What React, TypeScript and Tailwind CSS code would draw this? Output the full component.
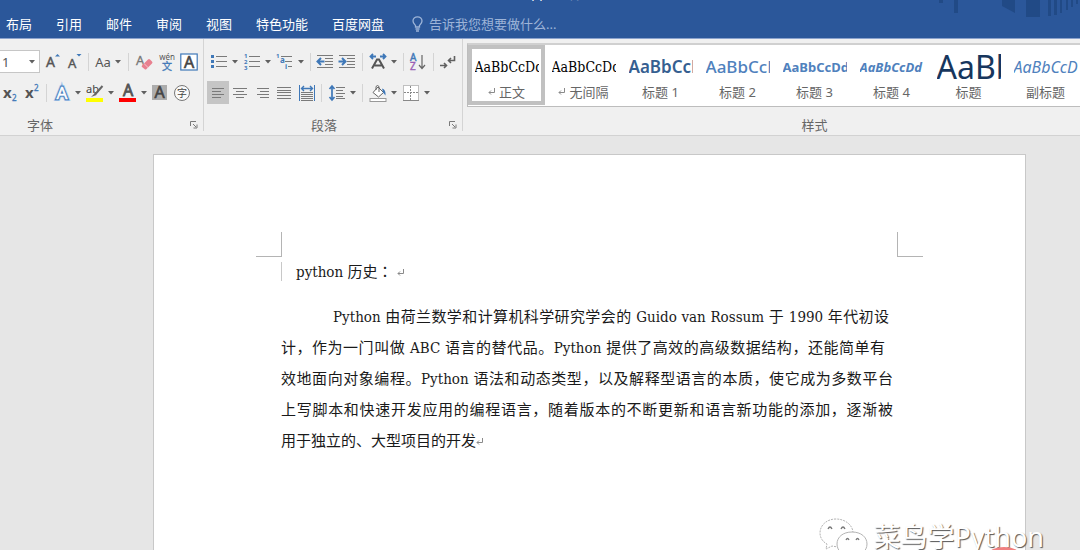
// src/App.tsx
import type { ReactNode } from 'react';

const tabs = ['布局', '引用', '邮件', '审阅', '视图', '特色功能', '百度网盘'];

const styles = [
  { name: '正文', mark: true, sample: 'font-["DejaVu_Serif_Condensed","Liberation_Serif",serif] text-sm text-black' },
  { name: '无间隔', mark: true, sample: 'font-["DejaVu_Serif_Condensed","Liberation_Serif",serif] text-sm text-black' },
  { name: '标题 1', mark: false, sample: 'text-[17px] font-semibold text-[#365f91]' },
  { name: '标题 2', mark: false, sample: 'text-[17px] font-medium text-[#4f81bd]' },
  { name: '标题 3', mark: false, sample: 'text-[13px] font-bold text-[#4f81bd]' },
  { name: '标题 4', mark: false, sample: 'text-[13px] font-bold italic text-[#4f81bd]' },
  { name: '标题', mark: false, sample: 'text-[32px] text-[#17365d]' },
  { name: '副标题', mark: false, sample: 'text-base italic text-[#4f81bd]' },
];

const lines = [
  { text: 'Python 由荷兰数学和计算机科学研究学会的 Guido van Rossum 于 1990 年代初设', box: 'pl-13 pr-1' },
  { text: '计，作为一门叫做 ABC 语言的替代品。Python 提供了高效的高级数据结构，还能简单有', box: 'pr-2' },
  { text: '效地面向对象编程。Python 语法和动态类型，以及解释型语言的本质，使它成为多数平台', box: '' },
  { text: '上写脚本和快速开发应用的编程语言，随着版本的不断更新和语言新功能的添加，逐渐被', box: '' },
];

const GREY = '#7a7a7a';
const BLUE = '#3f78b8';

function Arrow() {
  return (
    <svg width="6" height="4" viewBox="0 0 6 4" fill="#606060" className="shrink-0">
      <path d="M0 0h6L3 3.5z" />
    </svg>
  );
}

function Tool({ label, children, menu, active }: { label: string; children: ReactNode; menu?: boolean; active?: boolean }) {
  const width = menu ? 'w-[33px]' : 'w-[22px]';
  return (
    <button
      type="button"
      aria-label={label}
      className={`flex h-[23px] shrink-0 items-center justify-center gap-1 ${width} ${active ? 'bg-[#c5c5c5]' : ''}`}
    >
      {children}
      {menu && <Arrow />}
    </button>
  );
}

function Sep({ tight }: { tight?: boolean }) {
  return (
    <span className={`flex h-[18px] shrink-0 justify-center ${tight ? 'w-1' : 'w-2'}`}>
      <span className="w-px bg-[#d4d4d4]" />
    </span>
  );
}

function Icon({ children }: { children: ReactNode }) {
  return (
    <svg width="18" height="18" viewBox="0 0 18 18" fill="none" stroke={GREY} className="shrink-0 overflow-visible" fontFamily="Noto Sans, Noto Sans CJK SC, sans-serif">
      {children}
    </svg>
  );
}

// Horizontal rules given as [x1, x2, y]
function Rules({ rows }: { rows: number[][] }) {
  return <path d={rows.map(([a, b, y]) => `M${a} ${y}.5H${b}`).join('')} />;
}

function Launcher({ label }: { label: string }) {
  return (
    <button type="button" aria-label={label} className="flex h-4 w-[18px] shrink-0 items-center justify-center">
      <svg width="8" height="8" viewBox="0 0 8 8" fill="none" stroke={GREY}>
        <path d="M.5 5V.5H6M3 3l3 3M7 3.5V7H3.5" />
      </svg>
    </button>
  );
}

function ReturnMark({ className = '' }: { className?: string }) {
  return (
    <svg width="7" height="8" viewBox="0 0 7 8" fill="none" stroke="#8a8a8a" className={`inline-block shrink-0 ${className}`}>
      <path d="M6.5 0v4.5H1M3 2.5l-2 2 2 2" />
    </svg>
  );
}

function Header() {
  return (
    <header className="relative h-[39px] shrink-0 overflow-hidden border-b border-[#8ba2cd] bg-[#2b579a] text-[13px] text-white">
      <svg width="180" height="18" viewBox="0 0 180 18" fill="#214a86" className="absolute top-0 right-0">
        <path d="M39 0h4v3h-4zM54 0h4v13h-4zM102 0h13v13l-13-7zM126 0h14v17h-14zM148 0h3v16h-3zM154 0h3v15h-3zM160 0h2v13h-2zM166 0h2v10h-2zM171 0h2v7h-2zM176 0h2v4h-2z" />
      </svg>
      <p className="-mt-4 h-4 pl-[524px] leading-[18px]">app [兼容模式]</p>
      <nav className="relative flex items-center gap-6 px-[6px] pt-[15px] leading-[18px]">
        {tabs.map((t) => (
          <button key={t} type="button" className="shrink-0">{t}</button>
        ))}
        <label className="flex flex-1 items-center gap-[6px] pl-1 text-[#9db4d8]">
          <svg width="11" height="16" viewBox="0 0 11 16" fill="none" stroke="currentColor" strokeWidth="1.3">
            <path d="M3.5 11V9.5C2.200 8 1 7 1 5a4.500 4.200 0 0 1 9 0c0 2-1.200 3-2.500 4.500V11zM3.500 13h4M4 15h3" />
          </svg>
          <input
            type="text"
            aria-label="告诉我您想要做什么"
            placeholder="告诉我您想要做什么..."
            className="h-[18px] flex-1 bg-transparent outline-none placeholder:text-[#9db4d8]"
          />
        </label>
      </nav>
    </header>
  );
}

function FontGroup() {
  return (
    <section className="flex w-[203px] shrink-0 flex-col pt-[11px]">
      <div className="flex items-center">
        <label className="relative mr-0.5 flex h-[23px] w-10 items-center border border-l-0 border-[#c6c6c6] bg-white">
          <select aria-label="字号" className="w-full appearance-none pl-0.5 text-[13px] text-[#555]">
            <option>1</option>
          </select>
          <span className="pointer-events-none absolute right-1"><Arrow /></span>
        </label>
        <Tool label="增大字号">
          <Icon>
            <text x="2" y="14" fontSize="14" fill="#555" stroke="#555" strokeWidth=".4">A</text>
            <path d="M11 3.500h5L13.500 1z" fill={BLUE} stroke="none" />
          </Icon>
        </Tool>
        <Tool label="减小字号">
          <Icon>
            <text x="2" y="15" fontSize="13" fill="#555" stroke="#555" strokeWidth=".4">A</text>
            <path d="M10.500 1h5L13 3.500z" fill={BLUE} stroke="none" />
          </Icon>
        </Tool>
        <Sep tight />
        <button type="button" className="flex h-[23px] w-9 items-center justify-center gap-1 text-[13px] text-[#555]">Aa<Arrow /></button>
        <Sep tight />
        <span className="ml-1 flex">
          <Tool label="清除格式">
            <Icon>
              <text x="0" y="12" fontSize="13" fill="#777" stroke="#777" strokeWidth=".3">A</text>
              <path d="M6 12.500L12 6.500q1-1 2 0l2 2q1 1 0 2L10.500 16q-1 1-2 0L6 14q-.8-.7 0-1.500z" fill="#e8808f" stroke="none" />
              <path d="M8 10.500l4.500 4.500" stroke="#f6d5da" strokeWidth=".8" />
            </Icon>
          </Tool>
          <Tool label="拼音指南">
            <Icon>
              <text x="9" y="7" fontSize="8" textAnchor="middle" fill="#555" stroke="none">wén</text>
              <text x="9" y="17" fontSize="10" textAnchor="middle" fill={BLUE} stroke={BLUE} strokeWidth=".3">文</text>
            </Icon>
          </Tool>
          <Tool label="字符边框">
            <Icon>
              <rect x=".8" y="1" width="16.400" height="16" fill="#fff" stroke={BLUE} strokeWidth="1.200" />
              <text x="9" y="15" fontSize="16" textAnchor="middle" fill="#444" stroke="#444" strokeWidth=".6">A</text>
            </Icon>
          </Tool>
        </span>
      </div>
      <div className="mt-2 flex items-center">
        <button type="button" aria-label="下标" className="flex h-[23px] w-5 items-center justify-center">
          <Icon>
            <text x="2" y="14" fontSize="15" fontWeight="700" fill="#555" stroke="none">x</text>
            <text x="11" y="17" fontSize="8" fill={BLUE} stroke={BLUE} strokeWidth=".3">2</text>
          </Icon>
        </button>
        <Tool label="上标">
          <Icon>
            <text x="3" y="14" fontSize="15" fontWeight="700" fill="#555" stroke="none">x</text>
            <text x="12" y="7" fontSize="8" fill={BLUE} stroke={BLUE} strokeWidth=".3">2</text>
          </Icon>
        </Tool>
        <Sep />
        <Tool label="文本效果" menu>
          <Icon>
            <text x="9" y="15" fontSize="17" textAnchor="middle" stroke="#a9c9ec" strokeWidth="4">A</text>
            <text x="9" y="15" fontSize="17" textAnchor="middle" stroke={BLUE} strokeWidth="2.400">A</text>
            <text x="9" y="15" fontSize="17" textAnchor="middle" fill="#fff" stroke="#fff" strokeWidth=".5">A</text>
          </Icon>
        </Tool>
        <Tool label="突出显示" menu>
          <Icon>
            <text x="0" y="9" fontSize="11" fill="#444" stroke="none">ab</text>
            <path d="M16.500 2L9 10.500" stroke="#666" strokeWidth="2" />
            <path d="M9 9l1.500 2L5 13z" fill="#666" stroke="none" />
            <path d="M0 14h17v4H0z" fill="#ff0" stroke="none" />
          </Icon>
        </Tool>
        <Tool label="字体颜色" menu>
          <Icon>
            <text x="9" y="12" fontSize="16" textAnchor="middle" fill="#555" stroke="#555" strokeWidth=".8">A</text>
            <path d="M0 14h17v4H0z" fill="#f00" stroke="none" />
          </Icon>
        </Tool>
        <Tool label="字符底纹">
          <Icon>
            <path d="M1 1h15v15H1z" fill="#adadad" stroke="none" />
            <text x="8.500" y="14" fontSize="16" textAnchor="middle" fill="#444" stroke="#444" strokeWidth=".6">A</text>
          </Icon>
        </Tool>
        <Tool label="带圈字符">
          <Icon>
            <circle cx="9" cy="9" r="7.500" fill="#fafafa" stroke="#777" />
            <text x="9" y="12.500" fontSize="10" textAnchor="middle" fill="#444" stroke="none">字</text>
          </Icon>
        </Tool>
      </div>
      <div className="mt-3 flex items-center justify-between pl-[27px]">
        <span>字体</span>
        <Launcher label="字体设置" />
      </div>
    </section>
  );
}

function ParagraphGroup() {
  return (
    <section className="flex w-[260px] shrink-0 flex-col border-x border-[#d4d4d4] pt-[11px]">
      <div className="flex items-center pl-[3px]">
        <Tool label="项目符号" menu>
          <Icon>
            <path d="M1 2h3v3H1zM1 7h3v3H1zM1 12h3v3H1z" fill={BLUE} stroke="none" />
            <Rules rows={[[6, 17, 3], [6, 17, 8], [6, 17, 13]]} />
          </Icon>
        </Tool>
        <Tool label="编号" menu>
          <Icon>
            <text x="1" y="5" fontSize="6" fontWeight="700" fill={BLUE} stroke="none">1</text>
            <text x="1" y="11" fontSize="6" fontWeight="700" fill={BLUE} stroke="none">2</text>
            <text x="1" y="17" fontSize="6" fontWeight="700" fill={BLUE} stroke="none">3</text>
            <Rules rows={[[6, 17, 3], [6, 17, 8], [6, 17, 13]]} />
          </Icon>
        </Tool>
        <Tool label="多级列表" menu>
          <Icon>
            <text x="0" y="5" fontSize="6" fontWeight="700" fill={BLUE} stroke="none">1</text>
            <text x="4" y="10" fontSize="8" fontWeight="700" fill={BLUE} stroke="none">a</text>
            <text x="9" y="16" fontSize="7" fontWeight="700" fill={BLUE} stroke="none">i</text>
            <Rules rows={[[5, 16, 3], [9, 16, 8], [12, 16, 13]]} />
          </Icon>
        </Tool>
        <Sep />
        <Tool label="减少缩进">
          <Icon>
            <Rules rows={[[1, 17, 2], [9, 17, 5], [9, 17, 8], [9, 17, 11], [1, 17, 14]]} />
            <path d="M8.500 8.500H2M5 5L1.500 8.500 5 12" stroke={BLUE} strokeWidth="2" />
          </Icon>
        </Tool>
        <Tool label="增加缩进">
          <Icon>
            <Rules rows={[[1, 17, 2], [9, 17, 5], [9, 17, 8], [9, 17, 11], [1, 17, 14]]} />
            <path d="M.5 8.500H7M4 5l3.500 3.500L4 12" stroke={BLUE} strokeWidth="2" />
          </Icon>
        </Tool>
        <Sep />
        <Tool label="中文版式" menu>
          <Icon>
            <path d="M2 3.500h5M11 3.500h5M4 1L1.500 3.500 4 6M14 1l2.500 2.500L14 6" stroke={BLUE} strokeWidth="1.800" />
            <path d="M3 15.500L8 6.500h2l5 9M5.500 12.500h7" stroke="#555" strokeWidth="2" />
          </Icon>
        </Tool>
        <Sep />
        <Tool label="排序">
          <Icon>
            <text x="1" y="8" fontSize="10" fill={BLUE} stroke={BLUE} strokeWidth=".4">A</text>
            <text x="1" y="17" fontSize="10" fill="#9a5fb5" stroke="#9a5fb5" strokeWidth=".4">Z</text>
            <path d="M13 2v13M10 12l3 3.500 3-3.500" stroke="#666" strokeWidth="1.200" />
          </Icon>
        </Tool>
        <Sep />
        <Tool label="显示编辑标记">
          <Icon>
            <path d="M15.500 3v4.500H10M12 5L9.500 7.500 12 10M1 12.500h6M5 10l2.500 2.500L5 15" stroke="#606060" strokeWidth="1.600" />
          </Icon>
        </Tool>
      </div>
      <div className="mt-2 flex items-center pl-[3px]">
        <Tool label="左对齐" active>
          <Icon><Rules rows={[[3, 15, 4], [3, 12, 7], [3, 15, 10], [3, 12, 13]]} /></Icon>
        </Tool>
        <Tool label="居中">
          <Icon><Rules rows={[[2, 16, 4], [5, 13, 7], [2, 16, 10], [5, 13, 13]]} /></Icon>
        </Tool>
        <Tool label="右对齐">
          <Icon><Rules rows={[[4, 16, 4], [7, 16, 7], [4, 16, 10], [7, 16, 13]]} /></Icon>
        </Tool>
        <Tool label="两端对齐">
          <Icon><Rules rows={[[2, 16, 3], [2, 16, 6], [2, 16, 8], [2, 16, 11], [2, 16, 14]]} /></Icon>
        </Tool>
        <Tool label="分散对齐">
          <Icon>
            <path d="M2.500 1v16M17.500 1v16" stroke={BLUE} />
            <path d="M5 4.500h10M7 2L4.500 4.500 7 7M13 2l2.500 2.500L13 7" stroke={BLUE} strokeWidth="1.400" />
            <Rules rows={[[4, 16, 8], [4, 16, 10], [4, 16, 12], [4, 16, 14], [4, 16, 16]]} />
          </Icon>
        </Tool>
        <Sep />
        <Tool label="行距" menu>
          <Icon>
            <path d="M4 3v12M1.500 5L4 2l2.500 3M1.500 13L4 16l2.500-3" stroke={BLUE} strokeWidth="1.700" />
            <Rules rows={[[8, 17, 3], [8, 15, 6], [8, 17, 9], [8, 15, 12], [8, 17, 14]]} />
          </Icon>
        </Tool>
        <Sep />
        <Tool label="底纹" menu>
          <Icon>
            <path d="M9 3l5.500 5.500-5 4.500L4 8.500z" fill="#fff" stroke="#666" />
            <path d="M7 6V2.500q1.500-2 3 0V8" stroke="#666" />
            <path d="M13 4.500q4 1 3.500 7l-2.500-3z" fill={BLUE} stroke="none" />
            <rect x="1" y="14.500" width="16" height="3" fill="#fff" stroke="#999" />
          </Icon>
        </Tool>
        <Tool label="边框" menu>
          <Icon>
            <path d="M1.500 1.500h15v15h-15z" fill="#fff" stroke="#888" strokeDasharray="1 1" />
            <path d="M8.500 2v14M2 8.500h14" stroke="#888" strokeDasharray="2 1" />
            <path d="M1 16.500h16" stroke="#888" />
          </Icon>
        </Tool>
      </div>
      <div className="mt-3 flex items-center">
        <span className="flex-1 text-center">段落</span>
        <Launcher label="段落设置" />
      </div>
    </section>
  );
}

function StyleGallery() {
  return (
    <section className="ml-1 flex min-w-0 flex-1 flex-col pt-1">
      <div className="flex h-16 shrink-0 overflow-hidden border border-t-2 border-r-0 border-[#bdbdbd] border-t-[#d0d0d0] bg-white">
        {styles.map((s, i) => (
          <button
            key={s.name}
            type="button"
            className={`flex h-[60px] w-[77px] shrink-0 flex-col items-center border-4 ${i === 0 ? 'border-[#c1c1c1]' : 'border-transparent'}`}
          >
            <span className={`flex h-[35px] w-16 shrink-0 items-center overflow-hidden leading-[36px] ${s.sample}`}>AaBbCcDd</span>
            <span className="flex items-center gap-1 leading-[16px] text-[#666]">
              {s.mark && <ReturnMark />}
              {s.name}
            </span>
          </button>
        ))}
      </div>
      <span className="mt-[9px] pr-[78px] pl-[160px] text-center">样式</span>
    </section>
  );
}

function Document() {
  return (
    <main className="flex min-h-0 flex-1 overflow-hidden bg-[#e6e6e6] pt-[18px] pr-[54px] pl-[153px]">
      <article className="flex-1 border border-b-0 border-[#c8c8c8] bg-white pt-[77px] font-['DejaVu_Serif_Condensed','Liberation_Serif','Noto_Sans_CJK_SC',serif] text-[#1a1a1a]">
        <div className="flex justify-between px-[102px]">
          <span className="h-[25px] w-[26px] border-r border-b border-[#b4b4b4]" />
          <span className="h-[25px] w-[26px] border-b border-l border-[#b4b4b4]" />
        </div>
        <div className="pr-[132px] pl-[127px]">
          <h1 className="mt-[5px] h-[19px] border-l border-[#c8c8c8] pl-[14px] text-[15px] leading-[18px]">
            python 历史<span lang="zh-TW" className="font-['Noto_Sans_CJK_TC']">：</span>
            <ReturnMark className="ml-1" />
          </h1>
          <p className="mt-[21px] text-[15px] leading-[31px]">
            {lines.map((l) => (
              <span key={l.text} className={`block [text-align-last:justify] ${l.box}`}>{l.text}</span>
            ))}
            <span className="block">用于独立的、大型项目的开发<ReturnMark /></span>
          </p>
        </div>
      </article>
    </main>
  );
}

function Watermark() {
  return (
    <div className="pointer-events-none absolute right-9 bottom-0 flex h-8 items-start gap-1 overflow-hidden">
      <svg width="50" height="34" viewBox="0 0 50 34" fill="#fff" stroke="#b4b4b4" className="shrink-0">
        <path d="M17 1C8 1 1 7 1 15c0 5 3 9 7 11l-1 5 6-3c4 1 8 1 12 0 6-2 9-7 9-13C34 7 26 1 17 1z" strokeDasharray="2 1" />
        <path d="M33 14c-9 0-15 5-15 12s6 12 15 12 15-5 15-12-6-12-15-12z" />
        <path d="M9 11q2-4 4 0M22 11q2-4 4 0M27 22q1.500-3 3 0M37 22q1.500-3 3 0" stroke="#777" fill="none" strokeWidth="1.300" />
      </svg>
      <span className="text-[27px] leading-[38px] whitespace-nowrap text-white [text-shadow:1px_1px_1px_#555]">菜鸟学Python</span>
      <svg width="28" height="4" viewBox="0 0 28 4" className="absolute right-[26px] bottom-0">
        <ellipse cx="14" cy="9" rx="16" ry="8" fill="#f08080" />
      </svg>
    </div>
  );
}

export default function App() {
  return (
    <div className="relative flex h-screen flex-col overflow-hidden font-['Noto_Sans','Noto_Sans_CJK_SC',sans-serif]">
      <Header />
      <div className="flex h-[97px] shrink-0 border-b border-[#d2d2d2] bg-[#f0f0f0] pb-1 text-[13px] leading-[18px] text-[#666]">
        <FontGroup />
        <ParagraphGroup />
        <StyleGallery />
      </div>
      <Document />
      <Watermark />
    </div>
  );
}
